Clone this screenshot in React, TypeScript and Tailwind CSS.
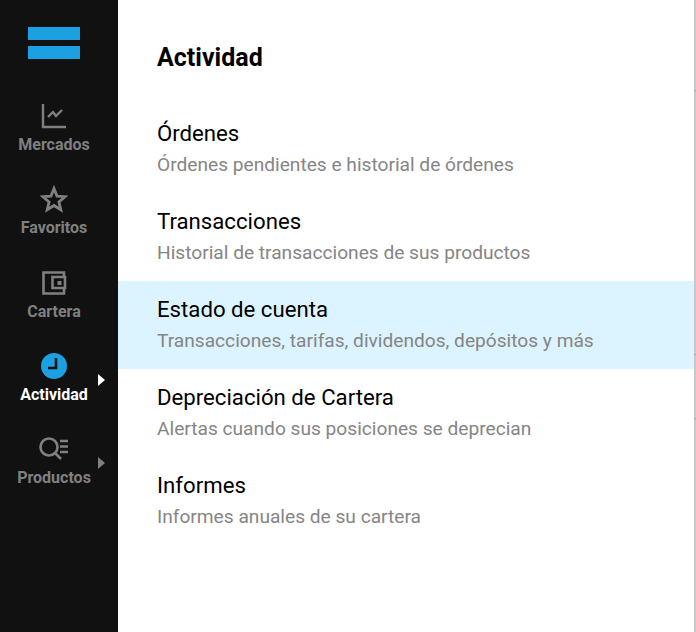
const navItems = [
  { label: "Mercados", icon: "chart" },
  { label: "Favoritos", icon: "star" },
  { label: "Cartera", icon: "wallet" },
  { label: "Actividad", icon: "clock", active: true, arrow: true },
  { label: "Productos", icon: "search", arrow: true },
];

const menuItems = [
  { title: "Órdenes", text: "Órdenes pendientes e historial de órdenes" },
  { title: "Transacciones", text: "Historial de transacciones de sus productos" },
  { title: "Estado de cuenta", text: "Transacciones, tarifas, dividendos, depósitos y más", active: true },
  { title: "Depreciación de Cartera", text: "Alertas cuando sus posiciones se deprecian" },
  { title: "Informes", text: "Informes anuales de su cartera" },
];

function NavIcon({ name }: { name: string }) {
  if (name === "chart") {
    return (
      <svg width="28" height="28" viewBox="0 0 28 28" fill="none" stroke="#808080" strokeWidth="2.400">
        <path d="M3 2v23h23" />
        <path d="M8 15l5-5 3 4 6-6" />
      </svg>
    );
  }
  if (name === "star") {
    return (
      <svg width="28" height="28" viewBox="0 0 28 28" fill="none" stroke="#808080" strokeWidth="2.800">
        <path d="M14 3.500l3 7.600 8 .6-6.100 5.200 1.900 7.900-6.800-4.300-6.800 4.300 1.900-7.900-6.100-5.200 8-.6z" />
      </svg>
    );
  }
  if (name === "wallet") {
    return (
      <svg width="28" height="28" viewBox="0 0 28 28" fill="none" stroke="#808080" strokeWidth="2.600">
        <path d="M24 8V3.500H3.500v21H24V19" />
        <path d="M12.500 8H25v11H12.500z" />
        <rect x="17.500" y="12" width="4" height="4" fill="#808080" stroke="none" />
      </svg>
    );
  }
  if (name === "clock") {
    return (
      <svg width="28" height="28" viewBox="0 0 28 28">
        <circle cx="14" cy="14" r="13" fill="#1ba1e2" />
        <path d="M16 6v10H8" fill="none" stroke="#111111" strokeWidth="2.600" />
      </svg>
    );
  }
  return (
    <svg width="32" height="28" viewBox="0 0 32 28" fill="none" stroke="#808080" strokeWidth="2.600">
      <circle cx="11" cy="12" r="8.500" />
      <path d="M17 18l6 6" />
      <path d="M22 6h8M22 11.500h8M22 17h8" />
    </svg>
  );
}

export default function App() {
  return (
    <div className="flex h-[632px] w-[696px] overflow-hidden bg-white font-['Roboto',sans-serif]">
      <aside className="flex w-[118px] shrink-0 flex-col items-center bg-[#111111] pr-[10px]">
        <div className="mt-[27px] mb-[42px] flex w-[52px] flex-col gap-[6px]">
          <div className="h-[13px] bg-[#1ba1e2]" />
          <div className="h-[13px] bg-[#1ba1e2]" />
        </div>
        {navItems.map((item) => (
          <div key={item.label} className="relative flex h-[83.250px] w-full flex-col items-center">
            <div className="flex h-[30px] items-center">
              <NavIcon name={item.icon} />
            </div>
            <span
              className={`mt-[4px] text-[16px] leading-[20px] font-bold ${
                item.active ? "text-white" : "text-[#808080]"
              }`}
            >
              {item.label}
            </span>
            {item.arrow && (
              <div
                className={`absolute top-[23px] left-[98px] h-0 w-0 border-y-[6px] border-l-[7px] border-y-transparent ${
                  item.active ? "border-l-white" : "border-l-[#808080]"
                }`}
              />
            )}
          </div>
        ))}
      </aside>
      <main className="flex min-w-0 flex-1 flex-col">
        <h1 className="pt-[44px] pl-[39px] text-[25px] leading-[28px] font-bold text-black">Actividad</h1>
        <ul className="mt-[33px]">
          {menuItems.map((item) => (
            <li
              key={item.title}
              className={`flex h-[88px] flex-col pt-[15px] pl-[39px] ${item.active ? "bg-[#dcf4ff]" : "bg-white"}`}
            >
              <div className="text-[22.200px] leading-[26px] text-black">{item.title}</div>
              <div className="mt-[8px] text-[19.150px] leading-[22px] text-[#858585]">{item.text}</div>
            </li>
          ))}
        </ul>
      </main>
      <div className="relative w-[2px] shrink-0 bg-[#c8c8c8]">
        <div className="absolute top-[90px] left-0 h-px w-[2px] bg-[#a8a8a8]" />
        <div className="absolute top-[354px] left-0 h-px w-[2px] bg-[#a8a8a8]" />
        <div className="absolute top-[418px] left-0 h-px w-[2px] bg-[#a8a8a8]" />
      </div>
    </div>
  );
}
